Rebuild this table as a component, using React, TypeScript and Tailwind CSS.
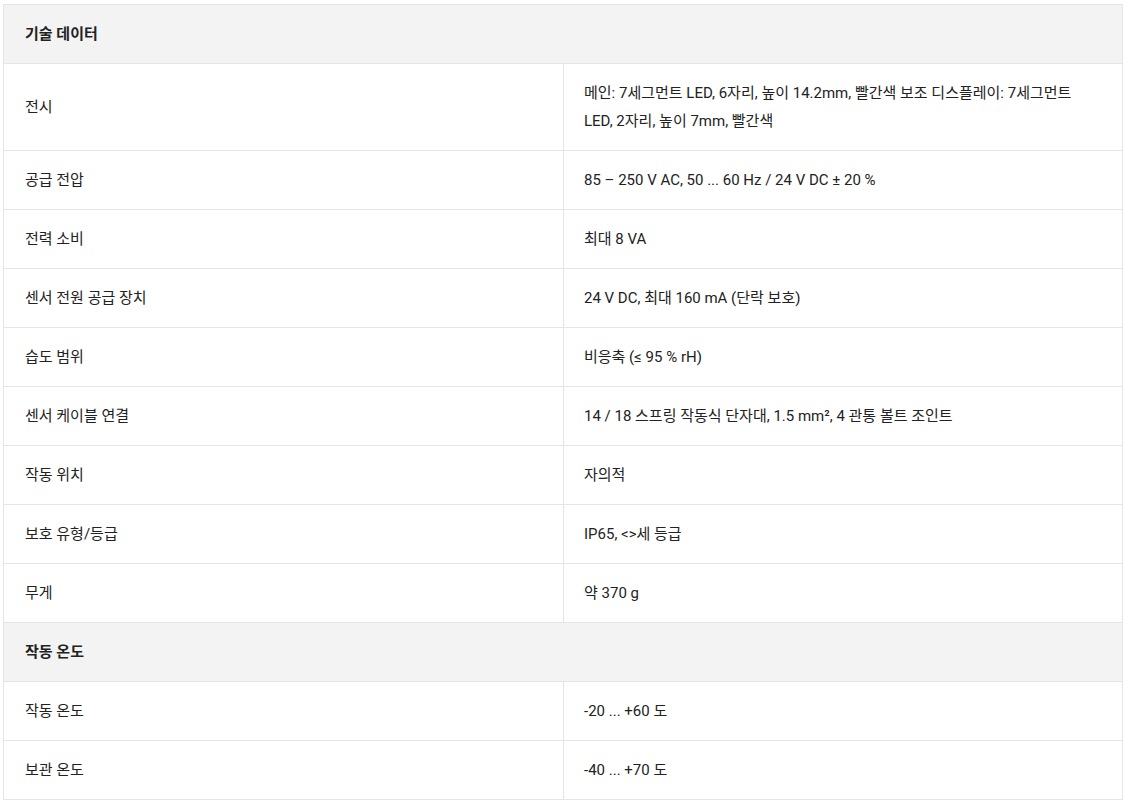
import React from "react";

type Row = { h: string } | { k: string; v: string };

const rows: Row[] = [
  { h: "기술 데이터" },
  { k: "전시", v: "메인: 7세그먼트 LED, 6자리, 높이 14.2mm, 빨간색 보조 디스플레이: 7세그먼트 LED, 2자리, 높이 7mm, 빨간색" },
  { k: "공급 전압", v: "85 – 250 V AC, 50 ... 60 Hz / 24 V DC ± 20 %" },
  { k: "전력 소비", v: "최대 8 VA" },
  { k: "센서 전원 공급 장치", v: "24 V DC, 최대 160 mA (단락 보호)" },
  { k: "습도 범위", v: "비응축 (≤ 95 % rH)" },
  { k: "센서 케이블 연결", v: "14 / 18 스프링 작동식 단자대, 1.5 mm², 4 관통 볼트 조인트" },
  { k: "작동 위치", v: "자의적" },
  { k: "보호 유형/등급", v: "IP65, <>세 등급" },
  { k: "무게", v: "약 370 g" },
  { h: "작동 온도" },
  { k: "작동 온도", v: "-20 ... +60 도" },
  { k: "보관 온도", v: "-40 ... +70 도" },
];

export default function App() {
  return (
    <div
      className="bg-white pl-[3px] pt-[4px] text-[15px] leading-[28px] text-[#222]"
      style={{ fontFamily: 'Roboto, "Noto Sans CJK KR", sans-serif' }}
    >
      <table className="w-[1120px] border-collapse table-fixed">
        <colgroup>
          <col className="w-[560px]" />
          <col />
        </colgroup>
        <tbody>
          {rows.map((r, i) =>
            "h" in r ? (
              <tr key={i} className="bg-[#f3f3f3]">
                <td colSpan={2} className="border border-[#e5e5e5] px-[21px] py-[15px] font-bold">
                  {r.h}
                </td>
              </tr>
            ) : (
              <tr key={i}>
                <td className="border border-[#e5e5e5] px-[21px] py-[15px] align-middle">{r.k}</td>
                <td className="border border-[#e5e5e5] px-[20px] py-[15px] align-middle">{r.v}</td>
              </tr>
            )
          )}
        </tbody>
      </table>
    </div>
  );
}
